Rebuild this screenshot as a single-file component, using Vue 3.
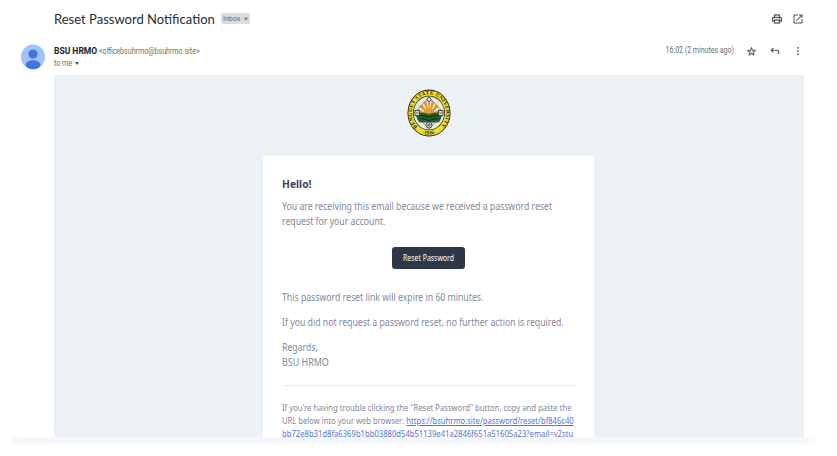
<script setup>
const linkLines = ['https://bsuhrmo.site/password/reset/bf846c40', 'bb72e8b31d8fa6369b1bb03880d54b51139e41a2846f651a51605a23?email=v2stu']
</script>

<template>
  <main class="page">
    <header class="subject">
      <h1>Reset Password Notification</h1>
      <span class="label"><span class="inbox">Inbox</span><span class="x">×</span></span>
      <div class="tools">
        <svg width="12" height="12" viewBox="0 0 24 24"><path fill="#505357" stroke="#505357" stroke-width=".500" d="M19 8h-1V3H6v5H5c-1.660 0-3 1.340-3 3v6h4v4h12v-4h4v-6c0-1.660-1.340-3-3-3zM8 5h8v3H8V5zm8 12v2H8v-4h8v2zm2-2v-2H6v2H4v-4c0-.550.450-1 1-1h14c.550 0 1 .450 1 1v4h-2z" /><circle cx="18" cy="11.500" r="1" fill="#505357" /></svg>
        <svg width="12" height="12" viewBox="0 0 24 24"><path fill="#505357" d="M19 19H5V5h7V3H5a2 2 0 0 0-2 2v14a2 2 0 0 0 2 2h14c1.100 0 2-.900 2-2v-7h-2v7zM14 3v2h3.590l-9.830 9.830 1.410 1.410L19 6.410V10h2V3h-7z" /></svg>
      </div>
    </header>

    <section class="sender">
      <svg class="avatar" width="24" height="26" viewBox="0 0 24 26" preserveAspectRatio="none">
        <clipPath id="face"><ellipse cx="12" cy="13" rx="12" ry="12.500" /></clipPath>
        <g clip-path="url(#face)">
          <rect width="24" height="26" fill="#a1c2fa" />
          <circle cx="12" cy="10" r="4.600" fill="#4375e0" />
          <ellipse cx="12" cy="20.700" rx="7.400" ry="4.500" fill="#4375e0" />
        </g>
      </svg>
      <div class="who">
        <div class="from"><b>BSU HRMO</b><span class="address">&lt;officebsuhrmo@bsuhrmo.site&gt;</span></div>
        <div class="to"><span class="me">to me</span><i class="caret"></i></div>
      </div>
      <div class="meta">
        <span class="time">16:02 (2 minutes ago)</span>
        <svg class="star" width="11" height="11" viewBox="0 0 24 24"><path fill="#505357" stroke="#505357" stroke-width=".600" d="M22 9.240l-7.190-.620L12 2 9.190 8.630 2 9.240l5.460 4.730L5.820 21 12 17.270 18.180 21l-1.630-7.030L22 9.240zM12 15.400l-3.760 2.270 1-4.280-3.320-2.880 4.380-.380L12 6.100l1.710 4.040 4.380.380-3.320 2.880 1 4.280L12 15.400z" /></svg>
        <svg class="reply" width="10" height="10" viewBox="0 0 24 24"><path fill="none" stroke="#505357" stroke-width="2.600" d="M8 4.500L3 10l5 5.500M3 10h13c3 0 5 2 5 5v5" /></svg>
        <svg class="more" width="4" height="10" viewBox="0 0 4 10"><g fill="#505357"><circle cx="2" cy="1.800" r=".900" /><circle cx="2" cy="5" r=".900" /><circle cx="2" cy="8.200" r=".900" /></g></svg>
      </div>
    </section>

    <section class="mail">
      <svg class="seal" width="44" height="48" viewBox="0 0 88 96" preserveAspectRatio="none">
        <defs>
          <path id="ring-top" d="M22 76.500A34.500 37 0 1 1 66 76.500" />
          <path id="ring-bottom" d="M18 81.200A40 43 0 0 0 70 81.200" />
          <clipPath id="diamond"><path d="M44 18L66 38 72 49 64 67H24L16 49l6-11z" /></clipPath>
        </defs>
        <ellipse cx="44" cy="48" rx="43" ry="47" fill="#191a12" />
        <ellipse cx="44" cy="48" rx="41.500" ry="45.200" fill="#f2df25" />
        <ellipse cx="44" cy="48" rx="32" ry="34.500" fill="#222820" />
        <ellipse cx="44" cy="48" rx="30.500" ry="33" fill="#e7ebe4" />
        <g clip-path="url(#diamond)">
          <path fill="#f5e9c8" d="M14 14h60v70H14z" />
          <path fill="#e99235" d="M44 51L12 45v-9zM44 51L18 30l7-7zM44 51L29 19l8-4zM44 51L41 14h6zM44 51L51 15l8 4zM44 51L63 23l7 7zM44 51l32-15v9z" />
          <circle cx="44" cy="49" r="11" fill="#ed9733" />
          <path fill="#24652b" d="M12 49q16-4 32 1 16-5 32-1v34H12z" />
          <path fill="none" stroke="#102f17" stroke-width="2.500" d="M15 54q14-3 29 2 15-5 29-2M20 60q12-2 24 3 12-5 24-3M28 67q8-1 16 3 8-4 16-3" />
        </g>
        <path fill="none" stroke="#59615a" stroke-width="1.200" d="M44 16L73 48 44 80 15 48z" />
        <g fill="#d8ddd7" stroke="#39403b" stroke-width="1.700">
          <circle cx="44" cy="21" r="4" /><circle cx="44" cy="72" r="6" />
          <rect x="16" y="43" width="9" height="10" /><rect x="63" y="43" width="9" height="10" />
        </g>
        <path fill="none" stroke="#39403b" stroke-width="1.500" d="M40 72h8M44 68v8M18 48h5M65 48h5" />
        <text class="ring"><textPath href="#ring-top" startOffset="1" textLength="172" lengthAdjust="spacing">BENGUET STATE UNIVERSITY</textPath></text>
        <text class="ring" text-anchor="middle"><textPath href="#ring-bottom" startOffset="50%">·1916·</textPath></text>
      </svg>

      <article class="card">
        <h2>Hello!</h2>
        <p><span class="line">You are receiving this email because we received a password reset</span><span class="line">request for your account.</span></p>
        <button class="reset"><span>Reset Password</span></button>
        <p><span class="line">This password reset link will expire in 60 minutes.</span></p>
        <p><span class="line">If you did not request a password reset, no further action is required.</span></p>
        <p><span class="line">Regards,</span><span class="line sign">BSU HRMO</span></p>
        <div class="trouble">
          <span class="line">If you're having trouble clicking the "Reset Password" button, copy and paste the</span>
          <span class="line mid">URL below into your web browser: <a>{{ linkLines[0] }}</a></span>
          <span class="line"><a class="tail">{{ linkLines[1] }}</a></span>
        </div>
      </article>
    </section>
    <div class="strip"></div>
  </main>
</template>

<style>
body { margin: 0; background: #fff; }
</style>

<style scoped>
.page { width: 837px; height: 456px; overflow: hidden; background: #fff; font-family: Roboto, sans-serif; display: flex; flex-direction: column; }
.subject { height: 37px; flex: none; box-sizing: border-box; padding-left: 54px; padding-right: 33px; display: flex; align-items: center; }
h1 { margin: 0; width: 161px; font-family: Lato, sans-serif; font-size: 14px; line-height: 18px; font-weight: 400; color: #2b2c2f; white-space: nowrap; transform: scaleX(.930); transform-origin: left; }
.label { margin-left: 6px; width: 29px; box-sizing: border-box; height: 11px; padding: 0 2px; border-radius: 2px; background: #ddd; color: #666; font-size: 8px; line-height: 11px; display: flex; justify-content: space-between; }
.inbox { width: 17px; transform: scaleX(.880); transform-origin: left; }
.x { font-size: 8px; }
.tools { margin-left: auto; display: flex; gap: 9px; }
.sender { height: 38px; flex: none; display: flex; padding-left: 21px; box-sizing: border-box; }
.avatar { margin-top: 7px; }
.who { margin-left: 9px; padding-top: 8px; white-space: nowrap; }
.from { height: 12px; line-height: 12px; display: flex; gap: 2px; }
.from b { font-size: 8.500px; color: #202124; }
.address { font-size: 8.200px; color: #6b6e72; transform: scaleX(.864); transform-origin: left; }
.to { height: 12px; line-height: 12px; font-size: 8.200px; color: #6b6e72; display: flex; align-items: center; gap: 3px; }
.me { width: 18px; transform: scaleX(.870); transform-origin: left; }
.caret { border: 2.500px solid transparent; border-top: 3px solid #505357; border-bottom: 0; }
.meta { margin-left: auto; height: 26px; display: flex; align-items: center; padding-right: 37px; }
.meta svg { position: relative; top: 1px; }
.time { font-size: 8.200px; color: #6b6e72; white-space: nowrap; transform: scaleX(.855); transform-origin: right; }
.star { margin-left: 12px; }
.reply { margin-left: 13px; }
.more { margin-left: 16px; }
.mail { width: 750px; height: 362px; flex: none; box-sizing: border-box; padding-right: 1px; margin-left: 54px; overflow: hidden; background: #ecf1f5; font-family: "Noto Sans", sans-serif; display: flex; flex-direction: column; align-items: center; }
.seal { flex: none; margin-top: 14px; }
.ring { font-family: "Liberation Serif", serif; font-weight: 700; font-size: 10.500px; fill: #171910; }
.card { box-sizing: border-box; width: 331px; height: 330px; flex: none; margin-top: 19px; padding: 21px 19px; background: #fff; color: #7f89a0; font-size: 10px; line-height: 15px; }
h2 { margin: 0 0 7px; color: #3d4452; font-size: 10.300px; line-height: 15px; }
p { margin: 0 0 10px; }
.line { display: block; white-space: nowrap; transform: scaleX(.870); transform-origin: left; }
.sign { transform: scaleX(.892); }
.reset { display: block; width: 73px; height: 22px; margin: 18px auto 21px; padding: 0; border: 0; border-radius: 3px; background: #2d3748; color: #fff; font: 8.600px/22px "Noto Sans", sans-serif; white-space: nowrap; }
.reset span { display: block; transform: scaleX(.805); }
.trouble { margin-top: 15px; padding-top: 16px; border-top: 1px solid #e8e9ee; font-size: 8.600px; line-height: 13px; }
.trouble .line { transform: scaleX(.891); }
.trouble .mid { transform: scaleX(.887); }
a { color: #5673d4; text-decoration: underline; }
.tail { text-underline-offset: 2px; }
.strip { position: relative; width: 803px; height: 7px; flex: none; margin-left: 12px; background: #f6f8fc; }
.strip::before { content: ""; position: absolute; left: 0; bottom: 100%; width: 7px; height: 7px; background: radial-gradient(circle at 100% 0, transparent 6.500px, #f6f8fc 7px); }
</style>
